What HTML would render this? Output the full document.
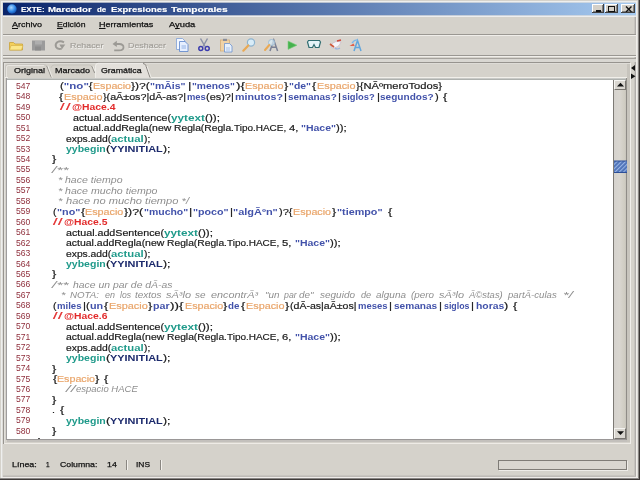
<!DOCTYPE html>
<html><head><meta charset="utf-8"><title>EXTE</title>
<style>
*{box-sizing:border-box}
html,body{margin:0;padding:0;background:#d5d2cb}
#all{position:absolute;left:0;top:0;width:640px;height:480px;filter:blur(0.45px)}
body{width:640px;height:480px;overflow:hidden;position:relative;background:#d5d2cb;font-family:"Liberation Sans",sans-serif;}
.abs{position:absolute}
.ft u{text-decoration-thickness:1px;text-underline-offset:1px}
#codewrap{position:absolute;left:0;top:0;width:640px;height:480px;overflow:hidden;clip-path:inset(80px 27px 41px 7px);filter:blur(0.3px)}
#chrometext{position:absolute;left:0;top:0;width:640px;height:480px;filter:blur(0.3px)}

.ln,.sg,.ft{position:absolute;line-height:12px;height:12px;white-space:pre;transform-origin:0 0}
.ln,.sg{font-size:8.5px;color:#1a1a1a}
.r,.o,.R{-webkit-text-stroke:.18px currentColor}
.ln{color:#8f2f3c}
.s,.k{font-weight:bold;color:#4252aa}
.o{color:#e9a56a}
.R{color:#e22b2b}
.RB{color:#e22b2b;font-weight:bold}
.t{color:#1f9a8a;font-weight:bold}
.n{color:#1c2a6c;font-weight:bold}
.c{color:#8e8e8e;font-style:italic}

.wb{position:absolute;top:4px;height:9px;background:#d4d0c8;box-shadow:inset -1px -1px 0 #404040,inset 1px 1px 0 #fff,inset -2px -2px 0 #808080}
.hsep{position:absolute;left:3px;width:633px;height:2px;border-top:1px solid #9a9792;border-bottom:1px solid #f0eeea}
.vsep{position:absolute;top:460px;width:2px;height:10px;border-left:1px solid #8a8782;border-right:1px solid #f4f2ee}
</style></head>
<body>
<div id="all">
<!-- outer frame -->
<div class="abs" style="left:0;top:0;width:640px;height:480px;background:#d5d2cb"></div>
<div class="abs" style="left:1px;top:1px;width:637px;height:1px;background:#eeefee"></div>
<div class="abs" style="left:2px;top:2px;width:635px;height:1px;background:#e2e1de"></div>
<div class="abs" style="left:1px;top:1px;width:1px;height:477px;background:#eeefee"></div>
<div class="abs" style="left:2px;top:2px;width:1px;height:475px;background:#dddbd7"></div>
<div class="abs" style="left:634px;top:16px;width:1px;height:461px;background:#c6c3be"></div>
<div class="abs" style="left:635px;top:16px;width:1px;height:461px;background:#b0adaa"></div>
<div class="abs" style="left:636px;top:2px;width:1px;height:476px;background:#f0eeea"></div>
<div class="abs" style="left:637px;top:1px;width:1px;height:477px;background:#dedcd8"></div>
<div class="abs" style="left:3px;top:475px;width:632px;height:1px;background:#c8c5c0"></div>
<div class="abs" style="left:3px;top:476px;width:633px;height:1px;background:#bdbab5"></div>
<div class="abs" style="left:2px;top:477px;width:636px;height:1px;background:#efecea"></div>
<div class="abs" style="left:638px;top:0;width:1px;height:479px;background:#8a8784"></div>
<div class="abs" style="left:0;top:478px;width:639px;height:1px;background:#8a8785"></div>
<div class="abs" style="left:639px;top:0;width:1px;height:480px;background:#3a3634"></div>
<div class="abs" style="left:0;top:479px;width:640px;height:1px;background:#3f3b3a"></div>

<!-- title bar -->
<svg class="abs" style="left:0;top:0" width="640" height="20" viewBox="0 0 640 20"><defs><linearGradient id="tg" x1="0" x2="1" y1="0" y2="0"><stop offset="0" stop-color="#0a246a"/><stop offset="1" stop-color="#a6caf0"/></linearGradient></defs><rect x="3" y="2.7" width="633" height="12.7" fill="url(#tg)"/><rect x="3" y="15.7" width="633" height="1.1" fill="#f4f5f7"/></svg>
<svg class="abs" style="left:6.6px;top:3.6px;filter:blur(.3px)" width="10" height="10" viewBox="0 0 11 11"><defs><radialGradient id="g" cx=".42" cy=".35" r=".75"><stop offset="0" stop-color="#a9d6ff"/><stop offset=".55" stop-color="#2f86e6"/><stop offset="1" stop-color="#0b3a98"/></radialGradient></defs><circle cx="5.5" cy="5.5" r="5.2" fill="url(#g)"/></svg>
<div class="wb" style="left:592px;width:12px"><div class="abs" style="left:3.5px;top:6.3px;width:5px;height:1.7px;background:#111"></div></div>
<div class="wb" style="left:605px;width:13px"><div class="abs" style="left:3px;top:1.5px;width:7px;height:6px;border:1px solid #111;border-top-width:1.6px"></div></div>
<div class="wb" style="left:621px;width:14px"><svg class="abs" style="left:3.5px;top:1.6px" width="7.5" height="6.4" viewBox="0 0 8 7"><path d="M1 0.5 L7 6.5 M7 0.5 L1 6.5" stroke="#111" stroke-width="1.5"/></svg></div>

<svg class="abs" style="left:3px;top:15px" width="633" height="22" viewBox="0 0 633 22"><rect x="0" y="19" width="633" height="1" fill="#9a9792"/><rect x="0" y="20" width="633" height="1" fill="#f0eeea"/></svg>
<div class="abs" style="left:3px;top:35.6px;width:633px;height:19.4px;background:#d8d5cf"></div>
<div class="hsep" style="top:55px"></div>
<div class="abs" style="left:3px;top:58px;width:633px;height:1px;background:#a5a29d"></div>
<div class="abs" style="left:3px;top:59px;width:633px;height:3px;background:#d9d7d2"></div>

<!-- toolbar icons -->
<svg class="abs" style="left:0;top:36px;filter:blur(.45px)" width="380" height="19" viewBox="0 36 380 19">
 <!-- folder -->
 <path d="M9.5 42.5 h4 l1.5 1.5 h7.5 v6 h-13 z" fill="#f3cf5a" stroke="#c9a23a" stroke-width=".8"/>
 <path d="M11 45.5 h12 l-1.5 4.5 h-12 z" fill="#fbe68a" stroke="#d1ab42" stroke-width=".6"/>
 <!-- save (disabled) -->
 <rect x="32" y="40.5" width="13" height="10" fill="#9b9b9b"/>
 <rect x="35" y="41" width="7" height="3.5" fill="#aeaeae"/>
 <rect x="35" y="46.5" width="6" height="4" fill="#8d8d8d"/>
 <!-- redo -->
 <path d="M64 42.4 Q60.5 40.4 57.5 42 Q54.8 44 56 47 Q57.5 49.8 61.8 48.6" fill="none" stroke="#9c9a95" stroke-width="1.9"/>
 <path d="M59.3 44.6 h6 l-3.2 4.4 z" fill="#9c9a95"/>
 <!-- undo -->
 <path d="M116.8 40.8 l-4.3 3.1 l4.3 3.1 z" fill="#9c9a95"/>
 <path d="M115.5 44 h3.8 q4.2 0.2 4.2 3.2 q0 3.2 -4.5 3.2 h-4.8" fill="none" stroke="#9c9a95" stroke-width="1.8"/>
 <!-- copy -->
 <path d="M176.5 38.5 h6 l3 3 v8 h-9 z" fill="#f4f8ff" stroke="#7f9fd6" stroke-width=".8"/>
 <path d="M179.5 41.5 h5.5 l3 3 v7 h-8.5 z" fill="#e6efff" stroke="#5b84cc" stroke-width=".8"/>
 <path d="M181.5 46 h4.5 M181.5 48 h4.5" stroke="#7fa3dd" stroke-width=".8"/>
 <!-- scissors -->
 <path d="M200.5 38.5 l4.5 8 M207.5 38.5 l-4.5 8" stroke="#8c92a8" stroke-width="1.5" fill="none"/>
 <circle cx="200.8" cy="48.6" r="2" fill="none" stroke="#3b3cae" stroke-width="1.5"/>
 <circle cx="207.2" cy="48.6" r="2" fill="none" stroke="#3b3cae" stroke-width="1.5"/>
 <!-- paste -->
 <rect x="220.5" y="40" width="9" height="11" fill="#f0d2a6" stroke="#d6ae78" stroke-width=".8"/>
 <rect x="223" y="38.8" width="4" height="2.2" fill="#8a8f9c"/>
 <path d="M224.5 43.5 h5 l2.5 2.5 v6 h-7.5 z" fill="#e8f0fb" stroke="#6d93cf" stroke-width=".8"/>
 <path d="M226 48 h4 M226 50 h4" stroke="#8fb0e0" stroke-width=".7"/>
 <!-- magnifier -->
 <circle cx="251" cy="42.5" r="3.6" fill="#d8ecf8" stroke="#8fb4cf" stroke-width="1.2"/>
 <path d="M248.3 45.5 l-5 5.2" stroke="#e9a955" stroke-width="2.2" stroke-linecap="round"/>
 <!-- find A -->
 <path d="M270 51 l3.8 -11 l3.8 11 M271.3 47.2 h5" fill="none" stroke="#7b8296" stroke-width="1.5"/>
 <circle cx="271.5" cy="42.5" r="3" fill="#d8ecf8" fill-opacity=".7" stroke="#9dbdd6" stroke-width="1"/>
 <path d="M269.3 45 l-4.3 5" stroke="#e9a955" stroke-width="2" stroke-linecap="round"/>
 <!-- play -->
 <path d="M288 41 l9 4.2 l-9 4.2 z" fill="#46b24e" stroke="#7fd07f" stroke-width=".6"/>
 <!-- glasses -->
 <path d="M308.5 40.5 h11 l1 1.5 l-1.5 5.5 h-3.5 l-1.5 -3 l-1.5 3 h-3.5 l-1.5 -5.5 z" fill="#e4f3f7" stroke="#2f6c70" stroke-width="1.2"/>
 <!-- brush icon -->
 <path d="M331 45 q4 -5 10 -3 q-2 6 -9 6 z" fill="#f5f5fa" stroke="#c8b8c8" stroke-width=".7"/>
 <path d="M330 44 l4 3" stroke="#d05a3a" stroke-width="1.6"/>
 <path d="M337 41 l4 -1" stroke="#d0483a" stroke-width="1.4"/>
 <path d="M335 48 q2 2 5 0" stroke="#9ab4e0" stroke-width="1.2" fill="none"/>
 <!-- A icon -->
 <path d="M354 51 l3.5 -10.5 l3.5 10.5 M355.3 47.5 h4.6" fill="none" stroke="#62a6dc" stroke-width="1.5"/>
 <path d="M349.5 46 l4 -2.5 l1.2 2.5 z" fill="#e0604a"/>
 <path d="M352 43 q3 -4 6 -3" stroke="#7fb8e8" stroke-width="1.3" fill="none"/>
</svg>

<!-- tabbed pane -->
<div class="abs" style="left:3px;top:62px;width:627px;height:1px;background:#97948f"></div>
<div class="abs" style="left:4px;top:63px;width:626px;height:1px;background:#dedcd7"></div>
<svg class="abs" style="left:0;top:60px;filter:blur(.3px)" width="640" height="22" viewBox="0 60 640 22">
 <!-- selected tab fill -->
 <path d="M95.5 78 L95.5 66 Q95.5 63.3 98 63.3 L143 63.3 Q145 63.3 146 66 L150 78 Z" fill="#e3e0db"/>
 <!-- unselected tabs -->
 <path d="M5.5 77.5 L5.5 67 Q5.5 64.5 8 64.5 L44 64.5 Q46.5 64.5 47.3 67" fill="none" stroke="#c3c0ba" stroke-width=".8"/>
 <path d="M6.4 77.5 L6.4 67.5 Q6.4 65.5 8.5 65.5 L44 65.5" fill="none" stroke="#eceae6" stroke-width=".8"/>
 <path d="M46.8 66 L51.3 77.5" fill="none" stroke="#8f8c87" stroke-width=".9"/>
 <path d="M47.9 66 L52.3 77.5" fill="none" stroke="#f3f1ee" stroke-width=".8"/>
 <path d="M51 68 Q51.5 65 54 65 L89 65 Q91.5 65 92.3 67.5" fill="none" stroke="#c3c0ba" stroke-width=".8"/>
 <path d="M91.8 66 L94.6 73" fill="none" stroke="#8f8c87" stroke-width=".9"/>
 <path d="M92.9 66 L95 71" fill="none" stroke="#f3f1ee" stroke-width=".8"/>
 <path d="M95.5 78 L95.5 66 Q95.5 63.3 98 63.3 L143 63.3" fill="none" stroke="#f3f1ee" stroke-width=".8"/>
 <path d="M143 63.5 Q145 63.5 145.8 65.5 L150 77.5" fill="none" stroke="#807d78" stroke-width=".9"/>
 <path d="M147 66 L151.2 77.5" fill="none" stroke="#f3f1ee" stroke-width=".8"/>
 <!-- arrows -->
 <path d="M635 65 L631 68 L635 71 Z" fill="#111"/>
 <path d="M631 73.5 L635.5 76.3 L631 79 Z" fill="#111"/>
</svg>

<!-- code area frame -->
<div class="abs" style="left:3px;top:62px;width:1px;height:382px;background:#97948f"></div>
<div class="abs" style="left:4px;top:63px;width:1px;height:380px;background:#e2e0dc"></div>
<div class="abs" style="left:5px;top:77px;width:3px;height:1px;background:#f1efea"></div>
<div class="abs" style="left:151px;top:77px;width:476px;height:1px;background:#f1efea"></div>
<div class="abs" style="left:6px;top:78px;width:621px;height:362px;background:#fff"></div>
<div class="abs" style="left:6px;top:78px;width:621px;height:1px;background:#c9cac7"></div>
<div class="abs" style="left:6px;top:79px;width:621px;height:1px;background:#aeb1ae"></div>
<div class="abs" style="left:6px;top:78px;width:1px;height:362px;background:#9f9d9e"></div>
<div class="abs" style="left:6px;top:439px;width:621px;height:1px;background:#9a9797"></div>
<div class="abs" style="left:626px;top:78px;width:1px;height:362px;background:#8f8c87"></div>
<div class="abs" style="left:7px;top:440px;width:623px;height:2px;background:#c3c0bc"></div>
<div class="abs" style="left:627px;top:64px;width:3px;height:378px;background:#c7c4bd"></div>
<div class="abs" style="left:4px;top:443px;width:627px;height:1px;background:#eeebe6"></div>
<div class="abs" style="left:630px;top:63px;width:1px;height:381px;background:#f0eeea"></div>

<div id="codewrap">
<div class="ln" style="top:79.80px;left:16.25px;transform:scaleX(1.011)">547</div>
<div class="sg" style="top:80.30px;left:59.60px;transform:scaleX(1.355)"><span class="r">(</span><span class="s">"no"</span><span class="r">{</span></div>
<div class="sg" style="top:80.30px;left:93.00px;transform:scaleX(1.256)"><span class="o">Espacio</span></div>
<div class="sg" style="top:80.30px;left:131.20px;transform:scaleX(1.421)"><span class="r">})?(</span></div>
<div class="sg" style="top:80.30px;left:150.40px;transform:scaleX(1.234)"><span class="s">"mÃis"</span></div>
<div class="sg" style="top:80.30px;left:187.54px;transform:scaleX(1.500)"><span class="r">|</span></div>
<div class="sg" style="top:80.30px;left:191.60px;transform:scaleX(1.207)"><span class="s">"menos"</span></div>
<div class="sg" style="top:80.30px;left:235.50px;transform:scaleX(1.587)"><span class="r">){</span></div>
<div class="sg" style="top:80.30px;left:245.00px;transform:scaleX(1.269)"><span class="o">Espacio</span></div>
<div class="sg" style="top:80.30px;left:284.07px;transform:scaleX(1.500)"><span class="r">}</span></div>
<div class="sg" style="top:80.30px;left:289.00px;transform:scaleX(1.223)"><span class="s">"de"</span></div>
<div class="sg" style="top:80.30px;left:312.12px;transform:scaleX(1.500)"><span class="r">{</span></div>
<div class="sg" style="top:80.30px;left:317.00px;transform:scaleX(1.273)"><span class="o">Espacio</span></div>
<div class="sg" style="top:80.30px;left:356.00px;transform:scaleX(1.313)"><span class="r">}{NÃºmeroTodos}</span></div>
<div class="ln" style="top:90.26px;left:16.25px;transform:scaleX(1.011)">548</div>
<div class="sg" style="top:90.76px;left:59.30px;transform:scaleX(1.477)"><span class="r">{</span></div>
<div class="sg" style="top:90.76px;left:64.40px;transform:scaleX(1.273)"><span class="o">Espacio</span></div>
<div class="sg" style="top:90.76px;left:103.00px;transform:scaleX(1.261)"><span class="r">}(aÃ±os?|dÃ-as?|</span></div>
<div class="sg" style="top:90.76px;left:186.60px;transform:scaleX(1.105)"><span class="k">mes</span></div>
<div class="sg" style="top:90.76px;left:206.20px;transform:scaleX(1.288)"><span class="r">(es)?|</span></div>
<div class="sg" style="top:90.76px;left:234.75px;transform:scaleX(1.255)"><span class="k">minutos?</span></div>
<div class="sg" style="top:90.76px;left:284.30px;transform:scaleX(1.352)"><span class="r">|</span></div>
<div class="sg" style="top:90.76px;left:287.75px;transform:scaleX(1.172)"><span class="k">semanas?</span></div>
<div class="sg" style="top:90.76px;left:338.00px;transform:scaleX(1.352)"><span class="r">|</span></div>
<div class="sg" style="top:90.76px;left:341.50px;transform:scaleX(1.100)"><span class="k">siglos?</span></div>
<div class="sg" style="top:90.76px;left:376.70px;transform:scaleX(1.352)"><span class="r">|</span></div>
<div class="sg" style="top:90.76px;left:380.25px;transform:scaleX(1.185)"><span class="k">segundos?</span></div>
<div class="sg" style="top:90.76px;left:435.25px;transform:scaleX(1.319)"><span class="r">)</span></div>
<div class="sg" style="top:90.76px;left:443.44px;transform:scaleX(1.500)"><span class="r">{</span></div>
<div class="ln" style="top:100.71px;left:16.25px;transform:scaleX(1.011)">549</div>
<div class="sg" style="top:101.21px;left:60.24px;transform:scaleX(1.900)"><span class="R">/</span></div>
<div class="sg" style="top:101.21px;left:65.99px;transform:scaleX(1.900)"><span class="R">/</span></div>
<div class="sg" style="top:101.21px;left:71.50px;transform:scaleX(1.218)"><span class="RB">@Hace.4</span></div>
<div class="ln" style="top:111.17px;left:16.25px;transform:scaleX(1.011)">550</div>
<div class="sg" style="top:111.67px;left:72.50px;transform:scaleX(1.257)"><span class="r">actual.addSentence(</span></div>
<div class="sg" style="top:111.67px;left:170.50px;transform:scaleX(1.383)"><span class="t">yytext</span></div>
<div class="sg" style="top:111.67px;left:204.50px;transform:scaleX(1.381)"><span class="r">());</span></div>
<div class="ln" style="top:121.62px;left:16.25px;transform:scaleX(1.011)">551</div>
<div class="sg" style="top:122.12px;left:72.50px;transform:scaleX(1.231)"><span class="r">actual.addRegla(new </span></div>
<div class="sg" style="top:122.12px;left:173.75px;transform:scaleX(1.209)"><span class="r">Regla(Regla.</span></div>
<div class="sg" style="top:122.12px;left:233.75px;transform:scaleX(1.172)"><span class="r">Tipo.HACE, </span></div>
<div class="sg" style="top:122.12px;left:288.75px;transform:scaleX(1.322)"><span class="r">4, </span></div>
<div class="sg" style="top:122.12px;left:301.25px;transform:scaleX(1.233)"><span class="s">"Hace"</span></div>
<div class="sg" style="top:122.12px;left:336.25px;transform:scaleX(1.339)"><span class="r">));</span></div>
<div class="ln" style="top:132.08px;left:16.25px;transform:scaleX(1.011)">552</div>
<div class="sg" style="top:132.58px;left:65.75px;transform:scaleX(1.212)"><span class="r">exps.add(</span></div>
<div class="sg" style="top:132.58px;left:111.00px;transform:scaleX(1.332)"><span class="t">actual</span></div>
<div class="sg" style="top:132.58px;left:143.75px;transform:scaleX(1.201)"><span class="r">);</span></div>
<div class="ln" style="top:142.53px;left:16.25px;transform:scaleX(1.011)">553</div>
<div class="sg" style="top:143.03px;left:65.75px;transform:scaleX(1.237)"><span class="t">yybegin</span></div>
<div class="sg" style="top:143.03px;left:105.50px;transform:scaleX(1.495)"><span class="r">(</span></div>
<div class="sg" style="top:143.03px;left:109.75px;transform:scaleX(1.284)"><span class="n">YYINITIAL</span></div>
<div class="sg" style="top:143.03px;left:162.50px;transform:scaleX(1.441)"><span class="r">);</span></div>
<div class="ln" style="top:152.99px;left:16.25px;transform:scaleX(1.011)">554</div>
<div class="sg" style="top:153.49px;left:52.37px;transform:scaleX(1.500)"><span class="r">}</span></div>
<div class="ln" style="top:163.44px;left:16.25px;transform:scaleX(1.011)">555</div>
<div class="sg" style="top:163.94px;left:52.00px;transform:scaleX(1.864)"><span class="c">/**</span></div>
<div class="ln" style="top:173.90px;left:16.25px;transform:scaleX(1.011)">556</div>
<div class="sg" style="top:174.40px;left:58.00px;transform:scaleX(1.358)"><span class="c">*</span></div>
<div class="sg" style="top:174.40px;left:65.00px;transform:scaleX(1.242)"><span class="c">hace tiempo</span></div>
<div class="ln" style="top:184.35px;left:16.25px;transform:scaleX(1.011)">557</div>
<div class="sg" style="top:184.85px;left:58.00px;transform:scaleX(1.358)"><span class="c">*</span></div>
<div class="sg" style="top:184.85px;left:65.00px;transform:scaleX(1.247)"><span class="c">hace mucho tiempo</span></div>
<div class="ln" style="top:194.80px;left:16.25px;transform:scaleX(1.011)">558</div>
<div class="sg" style="top:195.30px;left:58.00px;transform:scaleX(1.358)"><span class="c">*</span></div>
<div class="sg" style="top:195.30px;left:66.00px;transform:scaleX(1.308)"><span class="c">hace no mucho tiempo */</span></div>
<div class="ln" style="top:205.26px;left:16.25px;transform:scaleX(1.011)">559</div>
<div class="sg" style="top:205.76px;left:52.50px;transform:scaleX(1.231)"><span class="r">(</span></div>
<div class="sg" style="top:205.76px;left:56.60px;transform:scaleX(1.268)"><span class="s">"no"</span></div>
<div class="sg" style="top:205.76px;left:80.52px;transform:scaleX(1.500)"><span class="r">{</span></div>
<div class="sg" style="top:205.76px;left:85.30px;transform:scaleX(1.266)"><span class="o">Espacio</span></div>
<div class="sg" style="top:205.76px;left:124.00px;transform:scaleX(1.451)"><span class="r">})?(</span></div>
<div class="sg" style="top:205.76px;left:143.60px;transform:scaleX(1.230)"><span class="s">"mucho"</span></div>
<div class="sg" style="top:205.76px;left:188.80px;transform:scaleX(1.442)"><span class="r">|</span></div>
<div class="sg" style="top:205.76px;left:192.75px;transform:scaleX(1.256)"><span class="s">"poco"</span></div>
<div class="sg" style="top:205.76px;left:229.50px;transform:scaleX(1.352)"><span class="r">|</span></div>
<div class="sg" style="top:205.76px;left:233.40px;transform:scaleX(1.288)"><span class="s">"algÃºn"</span></div>
<div class="sg" style="top:205.76px;left:279.00px;transform:scaleX(1.297)"><span class="r">)?{</span></div>
<div class="sg" style="top:205.76px;left:293.20px;transform:scaleX(1.258)"><span class="o">Espacio</span></div>
<div class="sg" style="top:205.76px;left:331.80px;transform:scaleX(1.477)"><span class="r">}</span></div>
<div class="sg" style="top:205.76px;left:336.50px;transform:scaleX(1.267)"><span class="s">"tiempo"</span></div>
<div class="sg" style="top:205.76px;left:387.62px;transform:scaleX(1.500)"><span class="r">{</span></div>
<div class="ln" style="top:215.71px;left:16.25px;transform:scaleX(1.011)">560</div>
<div class="sg" style="top:216.21px;left:52.74px;transform:scaleX(1.900)"><span class="R">/</span></div>
<div class="sg" style="top:216.21px;left:58.49px;transform:scaleX(1.900)"><span class="R">/</span></div>
<div class="sg" style="top:216.21px;left:64.00px;transform:scaleX(1.218)"><span class="RB">@Hace.5</span></div>
<div class="ln" style="top:226.17px;left:16.25px;transform:scaleX(1.011)">561</div>
<div class="sg" style="top:226.67px;left:65.75px;transform:scaleX(1.257)"><span class="r">actual.addSentence(</span></div>
<div class="sg" style="top:226.67px;left:163.75px;transform:scaleX(1.383)"><span class="t">yytext</span></div>
<div class="sg" style="top:226.67px;left:197.75px;transform:scaleX(1.381)"><span class="r">());</span></div>
<div class="ln" style="top:236.62px;left:16.25px;transform:scaleX(1.011)">562</div>
<div class="sg" style="top:237.12px;left:65.75px;transform:scaleX(1.231)"><span class="r">actual.addRegla(new </span></div>
<div class="sg" style="top:237.12px;left:167.00px;transform:scaleX(1.209)"><span class="r">Regla(Regla.</span></div>
<div class="sg" style="top:237.12px;left:227.00px;transform:scaleX(1.172)"><span class="r">Tipo.HACE, </span></div>
<div class="sg" style="top:237.12px;left:282.00px;transform:scaleX(1.322)"><span class="r">5, </span></div>
<div class="sg" style="top:237.12px;left:294.50px;transform:scaleX(1.233)"><span class="s">"Hace"</span></div>
<div class="sg" style="top:237.12px;left:329.50px;transform:scaleX(1.339)"><span class="r">));</span></div>
<div class="ln" style="top:247.08px;left:16.25px;transform:scaleX(1.011)">563</div>
<div class="sg" style="top:247.58px;left:65.75px;transform:scaleX(1.212)"><span class="r">exps.add(</span></div>
<div class="sg" style="top:247.58px;left:111.00px;transform:scaleX(1.332)"><span class="t">actual</span></div>
<div class="sg" style="top:247.58px;left:143.75px;transform:scaleX(1.201)"><span class="r">);</span></div>
<div class="ln" style="top:257.53px;left:16.25px;transform:scaleX(1.011)">564</div>
<div class="sg" style="top:258.03px;left:65.75px;transform:scaleX(1.237)"><span class="t">yybegin</span></div>
<div class="sg" style="top:258.03px;left:105.50px;transform:scaleX(1.495)"><span class="r">(</span></div>
<div class="sg" style="top:258.03px;left:109.75px;transform:scaleX(1.284)"><span class="n">YYINITIAL</span></div>
<div class="sg" style="top:258.03px;left:162.50px;transform:scaleX(1.441)"><span class="r">);</span></div>
<div class="ln" style="top:267.99px;left:16.25px;transform:scaleX(1.011)">565</div>
<div class="sg" style="top:268.49px;left:52.37px;transform:scaleX(1.500)"><span class="r">}</span></div>
<div class="ln" style="top:278.44px;left:16.25px;transform:scaleX(1.011)">566</div>
<div class="sg" style="top:278.94px;left:52.00px;transform:scaleX(1.864)"><span class="c">/**</span></div>
<div class="sg" style="top:278.94px;left:72.50px;transform:scaleX(1.224)"><span class="c">hace un par de dÃ-as</span></div>
<div class="ln" style="top:288.89px;left:16.25px;transform:scaleX(1.011)">567</div>
<div class="sg" style="top:289.39px;left:61.25px;transform:scaleX(1.358)"><span class="c">*</span></div>
<div class="sg" style="top:289.39px;left:70.00px;transform:scaleX(1.144)"><span class="c">NOTA:</span></div>
<div class="sg" style="top:289.39px;left:104.50px;transform:scaleX(1.056)"><span class="c">en</span></div>
<div class="sg" style="top:289.39px;left:119.50px;transform:scaleX(1.011)"><span class="c">los</span></div>
<div class="sg" style="top:289.39px;left:134.50px;transform:scaleX(1.168)"><span class="c">textos</span></div>
<div class="sg" style="top:289.39px;left:166.25px;transform:scaleX(1.290)"><span class="c">sÃ³lo</span></div>
<div class="sg" style="top:289.39px;left:195.00px;transform:scaleX(1.169)"><span class="c">se</span></div>
<div class="sg" style="top:289.39px;left:210.50px;transform:scaleX(1.275)"><span class="c">encontrÃ³</span></div>
<div class="sg" style="top:289.39px;left:265.00px;transform:scaleX(1.161)"><span class="c">"un</span></div>
<div class="sg" style="top:289.39px;left:283.50px;transform:scaleX(1.033)"><span class="c">par</span></div>
<div class="sg" style="top:289.39px;left:299.40px;transform:scaleX(1.169)"><span class="c">de"</span></div>
<div class="sg" style="top:289.39px;left:320.00px;transform:scaleX(1.175)"><span class="c">seguido</span></div>
<div class="sg" style="top:289.39px;left:361.00px;transform:scaleX(1.083)"><span class="c">de</span></div>
<div class="sg" style="top:289.39px;left:375.50px;transform:scaleX(1.175)"><span class="c">alguna</span></div>
<div class="sg" style="top:289.39px;left:410.50px;transform:scaleX(1.159)"><span class="c">(pero</span></div>
<div class="sg" style="top:289.39px;left:438.75px;transform:scaleX(1.290)"><span class="c">sÃ³lo</span></div>
<div class="sg" style="top:289.39px;left:468.75px;transform:scaleX(1.112)"><span class="c">Ã©stas)</span></div>
<div class="sg" style="top:289.39px;left:507.50px;transform:scaleX(1.134)"><span class="c">partÃ-culas</span></div>
<div class="sg" style="top:289.39px;left:562.50px;transform:scaleX(1.763)"><span class="c">*/</span></div>
<div class="ln" style="top:299.35px;left:16.25px;transform:scaleX(1.011)">568</div>
<div class="sg" style="top:299.85px;left:52.50px;transform:scaleX(1.231)"><span class="r">(</span></div>
<div class="sg" style="top:299.85px;left:56.50px;transform:scaleX(1.126)"><span class="k">miles</span></div>
<div class="sg" style="top:299.85px;left:83.00px;transform:scaleX(1.352)"><span class="r">|</span></div>
<div class="sg" style="top:299.85px;left:86.20px;transform:scaleX(1.336)"><span class="r">(</span></div>
<div class="sg" style="top:299.85px;left:90.30px;transform:scaleX(1.270)"><span class="k">un</span></div>
<div class="sg" style="top:299.85px;left:104.12px;transform:scaleX(1.500)"><span class="r">{</span></div>
<div class="sg" style="top:299.85px;left:109.00px;transform:scaleX(1.283)"><span class="o">Espacio</span></div>
<div class="sg" style="top:299.85px;left:148.22px;transform:scaleX(1.500)"><span class="r">}</span></div>
<div class="sg" style="top:299.85px;left:153.00px;transform:scaleX(1.254)"><span class="k">par</span></div>
<div class="sg" style="top:299.85px;left:170.30px;transform:scaleX(1.588)"><span class="r">)){</span></div>
<div class="sg" style="top:299.85px;left:184.50px;transform:scaleX(1.264)"><span class="o">Espacio</span></div>
<div class="sg" style="top:299.85px;left:223.42px;transform:scaleX(1.500)"><span class="r">}</span></div>
<div class="sg" style="top:299.85px;left:228.40px;transform:scaleX(1.149)"><span class="k">de</span></div>
<div class="sg" style="top:299.85px;left:241.12px;transform:scaleX(1.500)"><span class="r">{</span></div>
<div class="sg" style="top:299.85px;left:246.00px;transform:scaleX(1.273)"><span class="o">Espacio</span></div>
<div class="sg" style="top:299.85px;left:285.12px;transform:scaleX(1.500)"><span class="r">}</span></div>
<div class="sg" style="top:299.85px;left:290.00px;transform:scaleX(1.243)"><span class="r">(dÃ-as|aÃ±os|</span></div>
<div class="sg" style="top:299.85px;left:358.00px;transform:scaleX(1.115)"><span class="k">meses</span></div>
<div class="sg" style="top:299.85px;left:389.30px;transform:scaleX(1.352)"><span class="r">|</span></div>
<div class="sg" style="top:299.85px;left:393.75px;transform:scaleX(1.188)"><span class="k">semanas</span></div>
<div class="sg" style="top:299.85px;left:438.70px;transform:scaleX(1.352)"><span class="r">|</span></div>
<div class="sg" style="top:299.85px;left:443.50px;transform:scaleX(1.038)"><span class="k">siglos</span></div>
<div class="sg" style="top:299.85px;left:470.80px;transform:scaleX(1.352)"><span class="r">|</span></div>
<div class="sg" style="top:299.85px;left:475.50px;transform:scaleX(1.220)"><span class="k">horas</span></div>
<div class="sg" style="top:299.85px;left:504.12px;transform:scaleX(1.500)"><span class="r">)</span></div>
<div class="sg" style="top:299.85px;left:513.12px;transform:scaleX(1.500)"><span class="r">{</span></div>
<div class="ln" style="top:309.80px;left:16.25px;transform:scaleX(1.011)">569</div>
<div class="sg" style="top:310.30px;left:52.74px;transform:scaleX(1.900)"><span class="R">/</span></div>
<div class="sg" style="top:310.30px;left:58.49px;transform:scaleX(1.900)"><span class="R">/</span></div>
<div class="sg" style="top:310.30px;left:64.00px;transform:scaleX(1.218)"><span class="RB">@Hace.6</span></div>
<div class="ln" style="top:320.26px;left:16.25px;transform:scaleX(1.011)">570</div>
<div class="sg" style="top:320.76px;left:65.75px;transform:scaleX(1.257)"><span class="r">actual.addSentence(</span></div>
<div class="sg" style="top:320.76px;left:163.75px;transform:scaleX(1.383)"><span class="t">yytext</span></div>
<div class="sg" style="top:320.76px;left:197.75px;transform:scaleX(1.381)"><span class="r">());</span></div>
<div class="ln" style="top:330.71px;left:16.25px;transform:scaleX(1.011)">571</div>
<div class="sg" style="top:331.21px;left:65.75px;transform:scaleX(1.231)"><span class="r">actual.addRegla(new </span></div>
<div class="sg" style="top:331.21px;left:167.00px;transform:scaleX(1.209)"><span class="r">Regla(Regla.</span></div>
<div class="sg" style="top:331.21px;left:227.00px;transform:scaleX(1.172)"><span class="r">Tipo.HACE, </span></div>
<div class="sg" style="top:331.21px;left:282.00px;transform:scaleX(1.322)"><span class="r">6, </span></div>
<div class="sg" style="top:331.21px;left:294.50px;transform:scaleX(1.233)"><span class="s">"Hace"</span></div>
<div class="sg" style="top:331.21px;left:329.50px;transform:scaleX(1.339)"><span class="r">));</span></div>
<div class="ln" style="top:341.17px;left:16.25px;transform:scaleX(1.011)">572</div>
<div class="sg" style="top:341.67px;left:65.75px;transform:scaleX(1.212)"><span class="r">exps.add(</span></div>
<div class="sg" style="top:341.67px;left:111.00px;transform:scaleX(1.332)"><span class="t">actual</span></div>
<div class="sg" style="top:341.67px;left:143.75px;transform:scaleX(1.201)"><span class="r">);</span></div>
<div class="ln" style="top:351.62px;left:16.25px;transform:scaleX(1.011)">573</div>
<div class="sg" style="top:352.12px;left:65.75px;transform:scaleX(1.237)"><span class="t">yybegin</span></div>
<div class="sg" style="top:352.12px;left:105.50px;transform:scaleX(1.495)"><span class="r">(</span></div>
<div class="sg" style="top:352.12px;left:109.75px;transform:scaleX(1.284)"><span class="n">YYINITIAL</span></div>
<div class="sg" style="top:352.12px;left:162.50px;transform:scaleX(1.441)"><span class="r">);</span></div>
<div class="ln" style="top:362.08px;left:16.25px;transform:scaleX(1.011)">574</div>
<div class="sg" style="top:362.58px;left:52.37px;transform:scaleX(1.500)"><span class="r">}</span></div>
<div class="ln" style="top:372.53px;left:16.25px;transform:scaleX(1.011)">575</div>
<div class="sg" style="top:373.03px;left:52.62px;transform:scaleX(1.500)"><span class="r">{</span></div>
<div class="sg" style="top:373.03px;left:57.00px;transform:scaleX(1.256)"><span class="o">Espacio</span></div>
<div class="sg" style="top:373.03px;left:95.37px;transform:scaleX(1.500)"><span class="r">}</span></div>
<div class="sg" style="top:373.03px;left:104.12px;transform:scaleX(1.500)"><span class="r">{</span></div>
<div class="ln" style="top:382.99px;left:16.25px;transform:scaleX(1.011)">576</div>
<div class="sg" style="top:383.49px;left:66.37px;transform:scaleX(1.900)"><span class="c">/</span></div>
<div class="sg" style="top:383.49px;left:71.37px;transform:scaleX(1.900)"><span class="c">/</span></div>
<div class="sg" style="top:383.49px;left:76.25px;transform:scaleX(1.117)"><span class="c">espacio HACE</span></div>
<div class="ln" style="top:393.44px;left:16.25px;transform:scaleX(1.011)">577</div>
<div class="sg" style="top:393.94px;left:52.37px;transform:scaleX(1.500)"><span class="r">}</span></div>
<div class="ln" style="top:403.89px;left:16.25px;transform:scaleX(1.011)">578</div>
<div class="sg" style="top:404.39px;left:52.30px;transform:scaleX(1.263)"><span class="r">.</span></div>
<div class="sg" style="top:404.39px;left:59.50px;transform:scaleX(1.495)"><span class="r">{</span></div>
<div class="ln" style="top:414.35px;left:16.25px;transform:scaleX(1.011)">579</div>
<div class="sg" style="top:414.85px;left:65.75px;transform:scaleX(1.237)"><span class="t">yybegin</span></div>
<div class="sg" style="top:414.85px;left:105.50px;transform:scaleX(1.495)"><span class="r">(</span></div>
<div class="sg" style="top:414.85px;left:109.75px;transform:scaleX(1.284)"><span class="n">YYINITIAL</span></div>
<div class="sg" style="top:414.85px;left:162.50px;transform:scaleX(1.441)"><span class="r">);</span></div>
<div class="ln" style="top:424.80px;left:16.25px;transform:scaleX(1.011)">580</div>
<div class="sg" style="top:425.30px;left:52.37px;transform:scaleX(1.500)"><span class="r">}</span></div>
</div>
<!-- scrollbar -->
<div class="abs" style="left:613px;top:80px;width:13px;height:359px;background:linear-gradient(90deg,#7d7a75 0,#7d7a75 1px,#d6d3ce 1.5px,#d9d6d0 50%,#cfccc2 90%,#c6c3bb)"></div>
<div class="abs" style="left:614px;top:80px;width:12px;height:10px;background:#d9d6d0;border:1px solid;border-color:#f5f4f1 #77746f #77746f #f5f4f1"></div>
<div class="abs" style="left:614px;top:428px;width:12px;height:11px;background:#d9d6d0;border:1px solid;border-color:#f5f4f1 #77746f #77746f #f5f4f1"></div>
<svg class="abs" style="left:613.5px;top:79px" width="13" height="360" viewBox="0 0 13 360">
 <path d="M3 7.5 L6.5 3.8 L10 7.5 Z" fill="#111"/>
 <path d="M3 352.2 L6.5 356 L10 352.2 Z" fill="#111"/>
 <defs><pattern id="st" width="3" height="3" patternUnits="userSpaceOnUse" patternTransform="rotate(-45)"><rect width="3" height="3" fill="#4f72b8"/><rect width="3" height="1.1" fill="#96b4e4"/></pattern></defs>
 <rect x="-.5" y="82" width="14" height="11.5" fill="url(#st)" stroke="#2d4f98" stroke-width="1"/>
</svg>

<!-- status -->
<div class="vsep" style="left:126px"></div>
<div class="vsep" style="left:160px"></div>
<div class="abs" style="left:498px;top:460px;width:129px;height:10px;border:1px solid #7f7c77;background:#d9d6d0;box-shadow:1px 1px 0 #eeece8"></div>

<div class="abs" style="left:38px;top:438px;width:2px;height:1px;background:#555"></div>

<div id="chrometext">
<div class="ft" style="left:20.6px;top:3.69px;font-size:8.1px;font-weight:bold;color:#fff;-webkit-text-stroke:.15px #fff;transform:scaleX(0.990)">EXTE:</div>
<div class="ft" style="left:48.2px;top:3.69px;font-size:8.1px;font-weight:bold;color:#fff;-webkit-text-stroke:.15px #fff;transform:scaleX(1.199)">Marcador</div>
<div class="ft" style="left:96.7px;top:3.69px;font-size:8.1px;font-weight:bold;color:#fff;-webkit-text-stroke:.15px #fff;transform:scaleX(0.984)">de</div>
<div class="ft" style="left:110.6px;top:3.69px;font-size:8.1px;font-weight:bold;color:#fff;-webkit-text-stroke:.15px #fff;transform:scaleX(1.169)">Expresiones</div>
<div class="ft" style="left:171.4px;top:3.69px;font-size:8.1px;font-weight:bold;color:#fff;-webkit-text-stroke:.15px #fff;transform:scaleX(1.262)">Temporales</div>
<div class="ft" style="left:12px;top:19.39px;font-size:8.1px;color:#111;-webkit-text-stroke:.25px #111;transform:scaleX(1.111)"><u>A</u>rchivo</div>
<div class="ft" style="left:57px;top:19.39px;font-size:8.1px;color:#111;-webkit-text-stroke:.25px #111;transform:scaleX(1.073)"><u>E</u>dición</div>
<div class="ft" style="left:99.4px;top:19.39px;font-size:8.1px;color:#111;-webkit-text-stroke:.25px #111;transform:scaleX(1.117)"><u>H</u>erramientas</div>
<div class="ft" style="left:168.7px;top:19.39px;font-size:8.1px;color:#111;-webkit-text-stroke:.25px #111;transform:scaleX(1.152)">A<u>y</u>uda</div>
<div class="ft" style="left:69.5px;top:39.89px;font-size:8.1px;color:#a19e98;-webkit-text-stroke:.2px #a19e98;text-shadow:.7px .8px 0 rgba(255,255,255,.75);transform:scaleX(1.095)">Rehacer</div>
<div class="ft" style="left:128px;top:39.89px;font-size:8.1px;color:#a19e98;-webkit-text-stroke:.2px #a19e98;text-shadow:.7px .8px 0 rgba(255,255,255,.75);transform:scaleX(1.097)">Deshacer</div>
<div class="ft" style="left:14px;top:65.43px;font-size:8.0px;color:#111;-webkit-text-stroke:.25px #111;transform:scaleX(1.124)">Original</div>
<div class="ft" style="left:55px;top:65.43px;font-size:8.0px;color:#111;-webkit-text-stroke:.25px #111;transform:scaleX(1.124)">Marcado</div>
<div class="ft" style="left:101px;top:65.43px;font-size:8.0px;color:#111;-webkit-text-stroke:.25px #111;transform:scaleX(1.100)">Gramática</div>
<div class="ft" style="left:11.8px;top:459.13px;font-size:8.0px;color:#111;-webkit-text-stroke:.25px #111;transform:scaleX(1.115)">Línea:</div>
<div class="ft" style="left:46.4px;top:459.13px;font-size:8.0px;color:#111;-webkit-text-stroke:.25px #111;transform:scaleX(0.808)">1</div>
<div class="ft" style="left:59.6px;top:459.13px;font-size:8.0px;color:#111;-webkit-text-stroke:.25px #111;transform:scaleX(1.092)">Columna:</div>
<div class="ft" style="left:106.9px;top:459.13px;font-size:8.0px;color:#111;-webkit-text-stroke:.25px #111;transform:scaleX(1.100)">14</div>
<div class="ft" style="left:136.4px;top:459.13px;font-size:8.0px;color:#111;-webkit-text-stroke:.25px #111;transform:scaleX(1.049)">INS</div>
</div>
</div>
</body></html>
